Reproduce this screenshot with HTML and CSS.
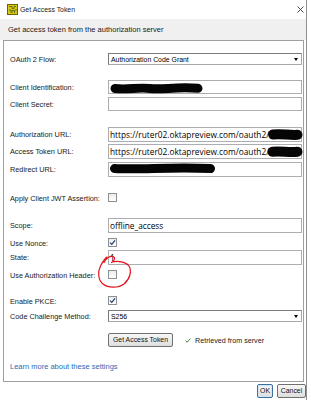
FILE: index.html
```html
<!DOCTYPE html>
<html>
<head>
<meta charset="utf-8">
<link rel="stylesheet" href="styles.css">
</head>
<body>
<div class="screen">
  <div class="window">
    <div class="titlebar">
      <svg class="app-icon" viewBox="0 0 11 11">
        <rect x="0.5" y="0.5" width="10" height="10" fill="#dcc614" stroke="#6b6400"/>
        <path d="M2 2.5h3v2h2v-2h2M2 6h2v3M5 9V6.5h2.5V9M9 5v2" fill="none" stroke="#4f6a10" stroke-width="0.9"/>
      </svg>
      <span class="title">Get Access Token</span>
      <svg class="close" viewBox="0 0 7 7">
        <path d="M0.5 0.5L6.5 6.5M6.5 0.5L0.5 6.5" stroke="#333" stroke-width="0.9"/>
      </svg>
    </div>
    <div class="header">Get access token from the authorization server</div>
    <div class="panel">
      <div class="row mt-12">
        <span class="label">OAuth 2 Flow:</span>
        <div class="select">Authorization Code Grant</div>
      </div>
      <div class="row mt-15">
        <span class="label">Client Identification:</span>
        <div class="field field-sm"></div>
      </div>
      <div class="row mt-3">
        <span class="label">Client Secret:</span>
        <div class="field field-sm"></div>
      </div>
      <div class="row mt-16">
        <span class="label">Authorization URL:</span>
        <div class="field">https://ruter02.oktapreview.com/oauth2/</div>
      </div>
      <div class="row mt-2">
        <span class="label">Access Token URL:</span>
        <div class="field">https://ruter02.oktapreview.com/oauth2/</div>
      </div>
      <div class="row mt-3">
        <span class="label">Redirect URL:</span>
        <div class="field"></div>
      </div>
      <div class="row mt-16 row-check">
        <span class="label">Apply Client JWT Assertion:</span>
        <span class="check"></span>
      </div>
      <div class="row mt-16">
        <span class="label">Scope:</span>
        <div class="field">offline_access</div>
      </div>
      <div class="row mt-5 row-check">
        <span class="label">Use Nonce:</span>
        <span class="check"><svg viewBox="0 0 7 7"><path d="M1 3.6L2.8 5.4L6 1.4" fill="none" stroke="#1d3c78" stroke-width="1.2"/></svg></span>
      </div>
      <div class="row mt-3">
        <span class="label">State:</span>
        <div class="field">1</div>
      </div>
      <div class="row mt-5 row-check">
        <span class="label">Use Authorization Header:</span>
        <span class="check"></span>
      </div>
      <div class="row mt-17 row-check">
        <span class="label">Enable PKCE:</span>
        <span class="check"><svg viewBox="0 0 7 7"><path d="M1 3.6L2.8 5.4L6 1.4" fill="none" stroke="#1d3c78" stroke-width="1.2"/></svg></span>
      </div>
      <div class="row mt-5">
        <span class="label">Code Challenge Method:</span>
        <div class="select">S256</div>
      </div>
      <div class="row mt-11">
        <span class="label"></span>
        <button class="btn btn-get">Get Access Token</button>
        <span class="status">
          <svg class="tick" viewBox="0 0 6 5"><path d="M0.6 2.6L2.2 4.2L5.4 0.6" fill="none" stroke="#3a8a2a" stroke-width="1"/></svg>
          Retrieved from server
        </span>
      </div>
      <div class="row mt-15">
        <a class="link">Learn more about these settings</a>
      </div>
    </div>
    <div class="footer">
      <button class="btn btn-ok">OK</button>
      <button class="btn btn-cancel">Cancel</button>
    </div>
  </div>
  <svg class="marks" viewBox="0 0 311 400">
    <g fill="none" stroke="#050505" stroke-linecap="round">
      <path d="M115 88.5C128 90 138 87 150 88.5S176 86.5 198 88.3" stroke-width="9"/>
      <path d="M273 134.5C281 133.5 290 135.5 297.5 134.8" stroke-width="10"/>
      <path d="M272.5 151.8C281 151 290 152.8 297.5 151.8" stroke-width="10"/>
      <path d="M114.5 168.5C140 170 170 166.8 210.5 168.6" stroke-width="9"/>
    </g>
    <path d="M112 262C118 260.5 126 262 129 266C132 271 130 279 124 284C118 288.5 108 288 103 284C98 280 97.5 272 100.5 266C102.5 262 104.5 259 107 257M104 262.5C106 258.5 110 255.5 113 256.5C115.5 257.5 114.5 261 111.5 262.5" fill="none" stroke="#e5121b" stroke-width="1.2" stroke-linecap="round"/>
  </svg>
</div>
</body>
</html>
```
FILE: styles.css
```css
html, body {
  margin: 0;
  padding: 0;
}

body {
  width: 311px;
  height: 400px;
  overflow: hidden;
  background: #ffffff;
  font-family: "Liberation Sans", Arial, sans-serif;
  color: #141414;
}

.screen {
  position: relative;
  width: 311px;
  height: 400px;
}

.window {
  width: 306px;
  height: 400px;
  border-right: 1px solid #8f8f8f;
  background: #ffffff;
  display: flex;
  flex-direction: column;
}

.titlebar {
  height: 19px;
  flex: none;
  display: flex;
  align-items: center;
}

.app-icon {
  width: 11px;
  height: 11px;
  margin-left: 7px;
  flex: none;
}

.title {
  margin-left: 2px;
  font-size: 6.9px;
  color: #1a1a1a;
}

.close {
  width: 7px;
  height: 7px;
  margin-left: auto;
  margin-right: 2px;
}

.header {
  height: 21px;
  flex: none;
  box-sizing: border-box;
  padding-left: 8px;
  background: #f0f0f0;
  display: flex;
  align-items: center;
  font-size: 7.5px;
  color: #1a1a1a;
}

.panel {
  margin-left: 3px;
  width: 301px;
  height: 342px;
  flex: none;
  box-sizing: border-box;
  border: 1px solid #a0a0a0;
  padding-left: 6px;
  display: flex;
  flex-direction: column;
  background: #ffffff;
}

.row {
  display: flex;
  align-items: center;
  flex: none;
}

.row-check {
  height: 9px;
}

.mt-2 { margin-top: 2px; }
.mt-3 { margin-top: 3px; }
.mt-5 { margin-top: 5px; }
.mt-11 { margin-top: 11px; }
.mt-12 { margin-top: 12px; }
.mt-15 { margin-top: 15px; }
.mt-16 { margin-top: 16px; }
.mt-17 { margin-top: 17px; }

.label {
  width: 98px;
  flex: none;
  font-size: 7.3px;
  white-space: nowrap;
  color: #1a1a1a;
}

.row-check .label {
  position: relative;
  top: 1px;
}

.field {
  width: 194px;
  height: 15px;
  box-sizing: border-box;
  border: 1px solid #abadb3;
  background: #ffffff;
  padding-left: 1px;
  display: flex;
  align-items: center;
  overflow: hidden;
  white-space: nowrap;
  font-family: "Open Sans", "Liberation Sans", sans-serif;
  font-size: 8.3px;
  color: #000000;
}

.field-sm {
  height: 14px;
}

.select {
  position: relative;
  width: 194px;
  height: 12px;
  box-sizing: border-box;
  border: 1px solid #7a7a7a;
  border-right-color: #a8a8a8;
  border-bottom-color: #a8a8a8;
  background: #ffffff;
  padding-left: 2px;
  display: flex;
  align-items: center;
  font-size: 6.9px;
  color: #000000;
  white-space: nowrap;
}

.select::after {
  content: "";
  position: absolute;
  right: 3px;
  top: 50%;
  margin-top: -1px;
  border-left: 2.5px solid transparent;
  border-right: 2.5px solid transparent;
  border-top: 3px solid #000000;
}

.check {
  width: 9px;
  height: 9px;
  box-sizing: border-box;
  border: 1px solid #8e8f8f;
  background: linear-gradient(#ececec, #ffffff);
  display: flex;
  align-items: center;
  justify-content: center;
  flex: none;
}

.check svg {
  width: 7px;
  height: 7px;
}

.btn {
  box-sizing: border-box;
  height: 14px;
  padding: 0;
  border: 1px solid #707070;
  border-radius: 2px;
  background: linear-gradient(#f7f7f7 0%, #ebebeb 50%, #dddddd 100%);
  font-family: "Liberation Sans", Arial, sans-serif;
  font-size: 6.9px;
  color: #111111;
  line-height: 12px;
  white-space: nowrap;
}

.btn-get {
  width: 65px;
}

.status {
  margin-left: 12px;
  display: flex;
  align-items: center;
  font-size: 7.2px;
  color: #1a1a1a;
}

.tick {
  width: 6px;
  height: 5px;
  margin-right: 4px;
}

.link {
  color: #2b6cb5;
  font-size: 7.5px;
  line-height: 10px;
}

.footer {
  flex: none;
  display: flex;
  justify-content: flex-end;
  gap: 4px;
  padding-top: 2px;
}

.btn-ok {
  width: 16px;
  border-color: #3c6e9f;
  box-shadow: inset 0 0 0 1px #cfe6f7;
}

.btn-cancel {
  width: 29px;
}

.marks {
  position: absolute;
  left: 0;
  top: 0;
  width: 311px;
  height: 400px;
  pointer-events: none;
}
```
